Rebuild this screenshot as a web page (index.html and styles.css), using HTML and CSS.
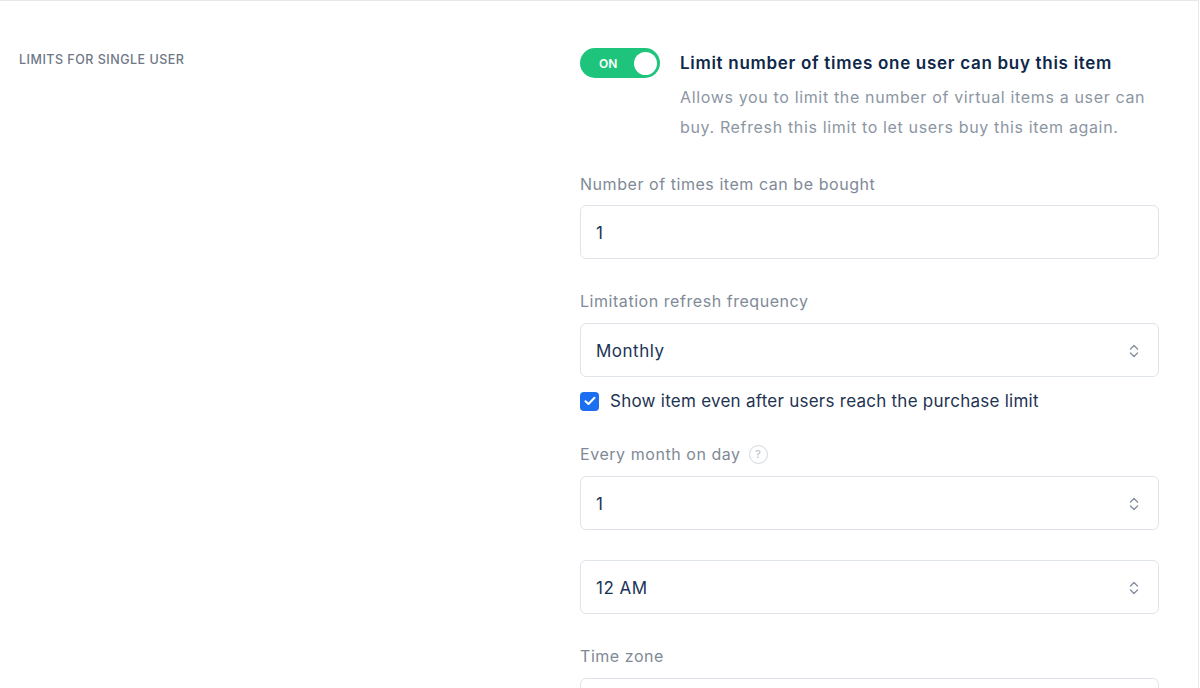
FILE: index.html
```html
<!DOCTYPE html>
<html lang="en">
<head>
    <meta charset="UTF-8">
    <meta name="viewport" content="width=device-width, initial-scale=1.0">
    <title>Item limits</title>
    <link rel="stylesheet" href="styles.css">
</head>
<body>
    <div class="panel">
        <section class="settings-row">
            <h3 class="section-title">Limits for single user</h3>

            <div class="section-body">
                <div class="switch-row">
                    <label class="switch">
                        <input type="checkbox" checked>
                        <span class="switch-track">
                            <span class="switch-text">ON</span>
                            <span class="switch-knob"></span>
                        </span>
                    </label>
                    <div class="switch-info">
                        <div class="switch-title">Limit number of times one user can buy this item</div>
                        <p class="switch-desc">Allows you to limit the number of virtual items a user can buy. Refresh this limit to let users buy this item again.</p>
                    </div>
                </div>

                <div class="field">
                    <label class="field-label" for="times">Number of times item can be bought</label>
                    <input class="field-input" type="text" id="times" value="1">
                </div>

                <div class="field">
                    <label class="field-label" for="frequency">Limitation refresh frequency</label>
                    <div class="select">
                        <span class="select-value" id="frequency">Monthly</span>
                        <svg class="select-arrows" width="10" height="14" viewBox="0 0 10 14"><path d="M1.5 5 L5 1.5 L8.5 5 M1.5 9 L5 12.5 L8.5 9" fill="none" stroke="#8a94a1" stroke-width="1.5" stroke-linecap="round" stroke-linejoin="round"/></svg>
                    </div>
                    <label class="check">
                        <span class="check-box">
                            <svg width="12" height="10" viewBox="0 0 12 10"><path d="M1.5 5.2 L4.5 8 L10.5 1.8" fill="none" stroke="#fff" stroke-width="2" stroke-linecap="round" stroke-linejoin="round"/></svg>
                        </span>
                        Show item even after users reach the purchase limit
                    </label>
                </div>

                <div class="field field-tight">
                    <label class="field-label">Every month on day <span class="help">?</span></label>
                    <div class="select">
                        <span class="select-value">1</span>
                        <svg class="select-arrows" width="10" height="14" viewBox="0 0 10 14"><path d="M1.5 5 L5 1.5 L8.5 5 M1.5 9 L5 12.5 L8.5 9" fill="none" stroke="#8a94a1" stroke-width="1.5" stroke-linecap="round" stroke-linejoin="round"/></svg>
                    </div>
                </div>

                <div class="field">
                    <div class="select">
                        <span class="select-value">12 AM</span>
                        <svg class="select-arrows" width="10" height="14" viewBox="0 0 10 14"><path d="M1.5 5 L5 1.5 L8.5 5 M1.5 9 L5 12.5 L8.5 9" fill="none" stroke="#8a94a1" stroke-width="1.5" stroke-linecap="round" stroke-linejoin="round"/></svg>
                    </div>
                </div>

                <div class="field">
                    <label class="field-label">Time zone</label>
                    <div class="select"></div>
                </div>
            </div>
        </section>
    </div>
</body>
</html>
```

FILE: styles.css
```css
body {
    margin: 0;
    background-color: #fff;
    font-family: Inter, "Noto Sans", sans-serif;
    color: #0f2a4b;
    overflow: hidden;
}
.panel {
    width: 1199px;
    height: 688px;
    overflow: hidden;
    border-top: 1px solid #e6e8eb;
    border-right: 1px solid #e6e8eb;
    box-sizing: border-box;
}
.settings-row {
    display: flex;
}
.section-title {
    width: 561px;
    margin: 0;
    padding: 51px 0 0 19px;
    font-size: 12.5px;
    font-weight: 500;
    line-height: 16px;
    letter-spacing: 0.5px;
    text-transform: uppercase;
    color: #6d7785;
}
.section-body {
    width: 579px;
    padding-top: 47px;
}
.switch-row {
    display: flex;
    gap: 20px;
}
.switch input {
    display: none;
}
.switch-track {
    display: flex;
    align-items: center;
    justify-content: space-between;
    width: 80px;
    height: 30px;
    padding: 0 3px 0 19px;
    box-sizing: border-box;
    border-radius: 15px;
    background-color: #1ec47b;
}
.switch-text {
    font-size: 12px;
    font-weight: 600;
    color: #fff;
}
.switch-knob {
    width: 23px;
    height: 23px;
    border-radius: 50%;
    background-color: #fff;
}
.switch-title {
    font-size: 17px;
    font-weight: 600;
    line-height: 30px;
    letter-spacing: 0.7px;
    color: #0e2849;
}
.switch-desc {
    margin: 4px 0 0;
    font-size: 16px;
    line-height: 30px;
    letter-spacing: 0.65px;
    color: #8c96a3;
}
.field {
    margin-top: 30px;
}
.field-tight {
    margin-top: 29px;
}
.field-label {
    display: flex;
    align-items: center;
    gap: 8px;
    margin-bottom: 9px;
    font-size: 16px;
    line-height: 24px;
    letter-spacing: 0.55px;
    color: #808a97;
}
.help {
    display: inline-flex;
    align-items: center;
    justify-content: center;
    width: 17px;
    height: 17px;
    border: 1px solid #d3d8de;
    border-radius: 50%;
    font-size: 11px;
    letter-spacing: 0;
    color: #b4bcc5;
}
.field-input, .select {
    display: flex;
    align-items: center;
    justify-content: space-between;
    width: 100%;
    height: 54px;
    padding: 2px 19px 0 15px;
    box-sizing: border-box;
    border: 1px solid #dfe4ea;
    border-radius: 6px;
    font-family: inherit;
    font-size: 17px;
    letter-spacing: 0.5px;
    color: #1a3356;
    background-color: #fff;
}
.field-label + .select {
    margin-top: 10px;
}
.field-input {
    outline: none;
}
.check {
    display: flex;
    align-items: center;
    gap: 11px;
    margin-top: 12px;
    font-size: 17px;
    line-height: 24px;
    letter-spacing: 0.25px;
    color: #1e3352;
}
.check-box {
    display: flex;
    align-items: center;
    justify-content: center;
    width: 19px;
    height: 19px;
    border-radius: 4px;
    background-color: #1c6ff0;
}
```
